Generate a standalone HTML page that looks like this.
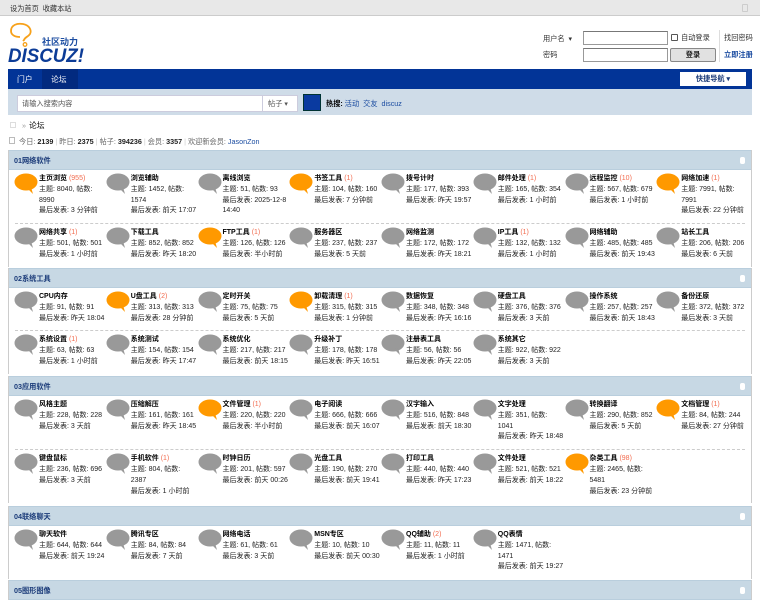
<!DOCTYPE html>
<html><head><meta charset="utf-8">
<style>
*{margin:0;padding:0;box-sizing:border-box}
body{width:760px;height:600px;overflow:hidden;background:#fff;font-family:"Liberation Sans","Noto Sans CJK SC",sans-serif;font-size:7.2px;color:#333;position:relative}
.top{height:16px;background:#e8e8e8;border-bottom:1px solid #ccc;position:relative}
.top span{position:absolute;left:10px;top:4px;color:#333}
.top i{position:absolute;left:742px;top:4px;width:6px;height:8px;border:1px solid #ccc;border-radius:1px}
.abs{position:absolute}
.inp{position:absolute;border:1px solid #999;border-top-color:#777;background:#fff}
.nav{position:absolute;left:8px;top:69px;width:744px;height:20px;background:#023497}
.nav span{position:absolute;top:5px;color:#fff;font-size:7.8px}
.srch{position:absolute;left:8px;top:89px;width:744px;height:26px;background:#cfdce8}
.sec{position:absolute;left:8px;width:744px;border-left:1px solid #ccc;border-right:1px solid #ccc}
.hd{height:20px;background:#c7d8e4;border-top:1px solid #b9cedd;border-bottom:1px solid #b9cedd;position:relative}
.hd b{position:absolute;left:5px;top:5px;color:#1b3b79;font-size:7.2px}
.hd i{position:absolute;right:6px;top:6px;width:5px;height:7px;background:#fff;border-radius:2px}
.row{display:flex;padding:4px 0 6px;position:relative}
.row+.row:before{content:"";position:absolute;left:6px;right:6px;top:-1px;border-top:1px dashed #ccc}
.row+.row{margin-top:1px}
.it{width:91.75px;flex:none;position:relative;padding-left:30px;line-height:10.8px;white-space:nowrap;font-size:7px;color:#222}
.it svg{position:absolute;left:5px;top:-1px}
.it b{color:#000}
.it em{font-style:normal;color:#f26c4f}
</style></head><body>
<div class="top"><span>设为首页&nbsp;&nbsp;收藏本站</span><i></i></div>

<svg class="abs" style="left:8px;top:22px" width="84" height="44" viewBox="0 0 84 44">
<path d="M3 9 C3 3 9 1 15 2 C21 3 24 8 22 12 C20 15 17 15 16 18 L15 19" fill="none" stroke="#f7a11a" stroke-width="1.8"/>
<path d="M3 9 C3 13 7 15 12 15" fill="none" stroke="#f7a11a" stroke-width="1.8"/>
<circle cx="17" cy="22.5" r="1.8" fill="none" stroke="#f7a11a" stroke-width="1.3"/>
<text x="34" y="23" font-family="Noto Sans CJK SC" font-weight="bold" font-size="9" fill="#1c4da1">社区动力</text>
<text x="0" y="40" font-family="Liberation Sans" font-weight="bold" font-style="italic" font-size="19" fill="#0c3c97" textLength="76" lengthAdjust="spacingAndGlyphs">DISCUZ!</text>
</svg>

<span class="abs" style="left:543px;top:34px">用户名 &nbsp;▾</span>
<div class="inp" style="left:583px;top:31px;width:85px;height:14px"></div>
<div class="abs" style="left:671px;top:34px;width:7px;height:7px;border:1px solid #555;border-radius:1px"></div>
<span class="abs" style="left:681px;top:33px">自动登录</span>
<div class="abs" style="left:719px;top:30px;height:32px;border-left:1px solid #ddd"></div>
<span class="abs" style="left:724px;top:33px">找回密码</span>
<span class="abs" style="left:543px;top:50px">密码</span>
<div class="inp" style="left:583px;top:48px;width:85px;height:14px"></div>
<div class="abs" style="left:670px;top:48px;width:46px;height:14px;background:#e1e1e1;border:1px solid #888;border-radius:2px;text-align:center;line-height:12px;font-weight:bold;color:#222">登录</div>
<span class="abs" style="left:724px;top:50px;color:#1c4da1;font-weight:bold">立即注册</span>

<div class="nav"><span style="left:9px">门户</span><div class="abs" style="left:34px;top:0;width:36px;height:20px;background:#022a7f"></div><span style="left:43px">论坛</span>
<div class="abs" style="left:672px;top:3px;width:66px;height:14px;background:#fff;text-align:center;line-height:14px;color:#1b3b79;font-weight:bold">快捷导航 ▾</div></div>

<div class="srch">
<div class="abs" style="left:9px;top:6px;width:246px;height:17px;background:#fff;border:1px solid #ccd"></div>
<span class="abs" style="left:14px;top:10px;color:#555">请输入搜索内容</span>
<div class="abs" style="left:254px;top:6px;width:36px;height:17px;background:#fff;border:1px solid #ccd"></div>
<span class="abs" style="left:260px;top:10px;color:#555">帖子 ▾</span>
<div class="abs" style="left:295px;top:5px;width:18px;height:17px;background:#0a3aa0;border:1px solid #033"></div>
<span class="abs" style="left:318px;top:10px"><b style="color:#000">热搜:</b> <span style="color:#1c4da1">活动&nbsp; 交友&nbsp; discuz</span></span>
</div>

<div class="abs" style="left:10px;top:122px;width:6px;height:6px;border:1px solid #ddd"></div>
<span class="abs" style="left:22px;top:121px;color:#999">»</span>
<span class="abs" style="left:29px;top:120px;color:#000;font-size:7.8px">论坛</span>
<div class="abs" style="left:9px;top:137px;width:6px;height:7px;border:1px solid #bbb"></div>
<span class="abs" style="left:19px;top:137px;color:#666">今日: <b style="color:#222">2139</b> <span style="color:#ccc">|</span> 昨日: <b style="color:#222">2375</b> <span style="color:#ccc">|</span> 帖子: <b style="color:#222">394236</b> <span style="color:#ccc">|</span> 会员: <b style="color:#222">3357</b> <span style="color:#ccc">|</span> 欢迎新会员: <span style="color:#1c4da1">JasonZon</span></span>

<svg width="0" height="0" style="position:absolute"><defs>
<g id="g"><ellipse cx="12" cy="9" rx="11.5" ry="8.5" fill="#999"/><path d="M13 15 L19 21 L17 14 Z" fill="#999"/></g>
<g id="o"><ellipse cx="12" cy="9" rx="11.5" ry="8.5" fill="#f90"/><path d="M13 15 L19 21 L17 14 Z" fill="#f90"/></g>
</defs></svg>

<div id="forums"></div>
<script>
const G='<svg width="25" height="22"><use href="#g"/></svg>',O='<svg width="25" height="22"><use href="#o"/></svg>';
const wrapP={8040:1,1452:1,7991:1,351:1,804:1,2465:1,1471:1};
function it(n,c,t,p,l,o){
 let s='主题: '+t+', 帖数:'+(wrapP[t]?'<br>':' ')+p;
 let L='最后发表: '+(l==='2025-12-8 14:40'?'2025-12-8<br>14:40':l);
 return '<div class="it">'+(o?O:G)+'<b>'+n+'</b>'+(c?' <em>('+c+')</em>':'')+'<br>'+s+'<br>'+L+'</div>';}
const secs=[
[150,'01网络软件',[[
['主页浏览',955,8040,8990,'3 分钟前',1],['浏览辅助',0,1452,1574,'前天 17:07'],['离线浏览',0,51,93,'2025-12-8 14:40'],['书签工具',1,104,160,'7 分钟前',1],['拨号计时',0,177,393,'昨天 19:57'],['邮件处理',1,165,354,'1 小时前'],['远程监控',10,567,679,'1 小时前'],['网络加速',1,7991,7991,'22 分钟前',1]],[
['网络共享',1,501,501,'1 小时前'],['下载工具',0,852,852,'昨天 18:20'],['FTP工具',1,126,126,'半小时前',1],['服务器区',0,237,237,'5 天前'],['网络监测',0,172,172,'昨天 18:21'],['IP工具',1,132,132,'1 小时前'],['网络辅助',0,485,485,'前天 19:43'],['站长工具',0,206,206,'6 天前']]]],
[268,'02系统工具',[[
['CPU内存',0,91,91,'昨天 18:04'],['U盘工具',2,313,313,'28 分钟前',1],['定时开关',0,75,75,'5 天前'],['卸载清理',1,315,315,'1 分钟前',1],['数据恢复',0,348,348,'昨天 16:16'],['硬盘工具',0,376,376,'3 天前'],['操作系统',0,257,257,'前天 18:43'],['备份还原',0,372,372,'3 天前']],[
['系统设置',1,63,63,'1 小时前'],['系统测试',0,154,154,'昨天 17:47'],['系统优化',0,217,217,'前天 18:15'],['升级补丁',0,178,178,'昨天 16:51'],['注册表工具',0,56,56,'昨天 22:05'],['系统其它',0,922,922,'3 天前']]]],
[376,'03应用软件',[[
['风格主题',0,228,228,'3 天前'],['压缩解压',0,161,161,'昨天 18:45'],['文件管理',1,220,220,'半小时前',1],['电子阅读',0,666,666,'前天 16:07'],['汉字输入',0,516,848,'前天 18:30'],['文字处理',0,351,1041,'昨天 18:48'],['转换翻译',0,290,852,'5 天前'],['文档管理',1,84,244,'27 分钟前',1]],[
['键盘鼠标',0,236,696,'3 天前'],['手机软件',1,804,2387,'1 小时前'],['时钟日历',0,201,597,'前天 00:26'],['光盘工具',0,190,270,'前天 19:41'],['打印工具',0,440,440,'昨天 17:23'],['文件处理',0,521,521,'前天 18:22'],['杂类工具',98,2465,5481,'23 分钟前',1]]]],
[506,'04联络聊天',[[
['聊天软件',0,644,644,'前天 19:24'],['腾讯专区',0,84,84,'7 天前'],['网络电话',0,61,61,'3 天前'],['MSN专区',0,10,10,'前天 00:30'],['QQ辅助',2,11,11,'1 小时前'],['QQ表情',0,1471,1471,'前天 19:27']]]],
[580,'05图形图像',[]]];
let h='';
for(const [y,t,rows] of secs){h+='<div class="sec" style="top:'+y+'px"><div class="hd"><b>'+t+'</b><i></i></div>';
for(const r of rows){h+='<div class="row">'+r.map(a=>it(a[0],a[1],a[2],a[3],a[4],a[5])).join('')+'</div>';}
h+='</div>';}
document.getElementById('forums').innerHTML=h;
</script>
</body></html>
